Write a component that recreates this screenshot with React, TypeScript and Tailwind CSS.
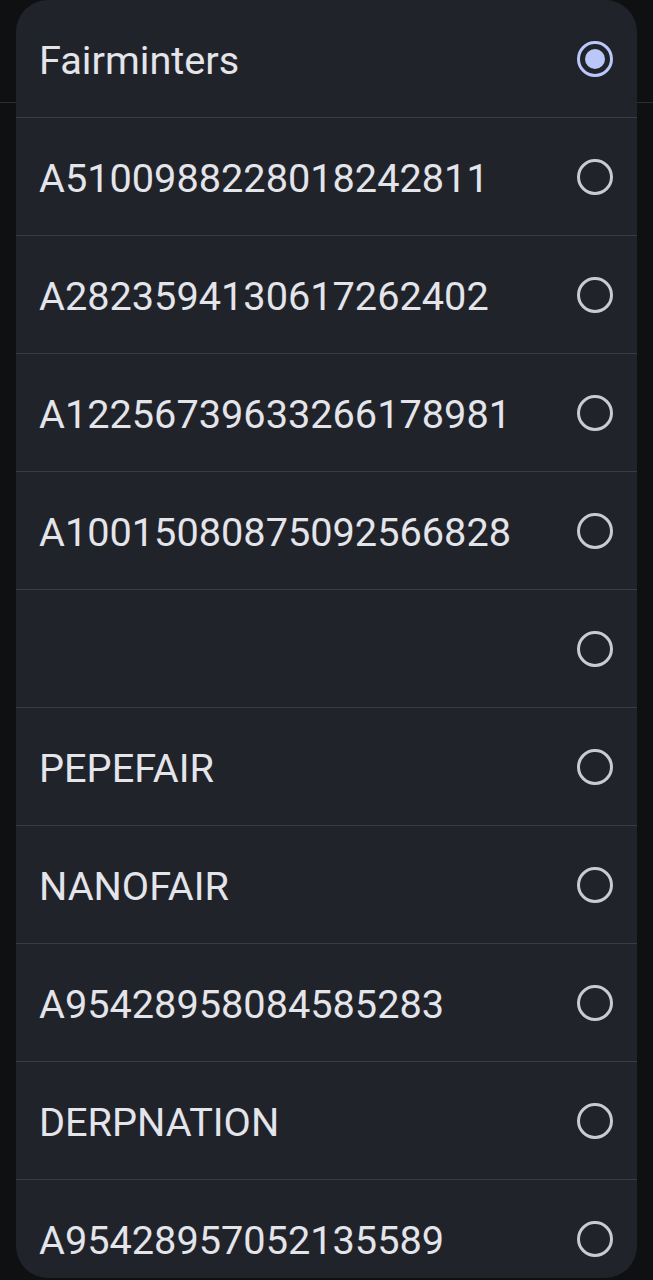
import React from "react";

const items = [
  "Fairminters",
  "A5100988228018242811",
  "A2823594130617262402",
  "A12256739633266178981",
  "A10015080875092566828",
  "",
  "PEPEFAIR",
  "NANOFAIR",
  "A95428958084585283",
  "DERPNATION",
  "A95428957052135589",
];

function Radio({ checked }: { checked: boolean }) {
  return checked ? (
    <span className="flex h-[36px] w-[36px] items-center justify-center rounded-full border-[3px] border-[#b9c8f8]">
      <span className="h-[20px] w-[20px] rounded-full bg-[#b9c8f8]" />
    </span>
  ) : (
    <span className="block h-[36px] w-[36px] rounded-full border-[3px] border-[#c9cbd1]" />
  );
}

export default function App() {
  return (
    <div className="relative h-[1280px] w-full overflow-hidden bg-[#0f1012]">
      {/* page behind the menu */}
      <div className="h-[103px] border-b border-[#2c2d31]" />

      {/* selection menu */}
      <div className="absolute left-[16px] top-0 h-[1278px] w-[621px] overflow-hidden rounded-[32px] bg-[#21232b]">
        {items.map((label, i) => (
          <div
            key={i}
            className={`flex items-center justify-between pl-[23px] pr-[24px] ${
              i > 0 ? "h-[118px] border-t border-[#3a3c44]" : "h-[117px]"
            }`}
          >
            <span
              className="pt-[5px] text-[39.7px] leading-none text-[#e4e5ea]"
              style={{ fontFamily: "Roboto, 'Liberation Sans', sans-serif" }}
            >
              {label}
            </span>
            <Radio checked={i === 0} />
          </div>
        ))}
      </div>
    </div>
  );
}
